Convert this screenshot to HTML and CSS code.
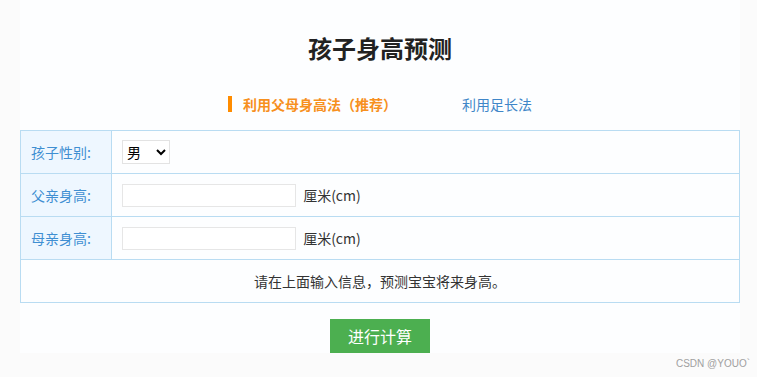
FILE: index.html
```html
<!DOCTYPE html>
<html lang="zh-CN">
<head>
    <meta charset="UTF-8">
    <title>孩子身高预测</title>
    <link rel="stylesheet" href="styles.css">
</head>
<body>
    <div class="wrap">
        <h1 class="title">孩子身高预测</h1>
        <div class="tabs">
            <span class="tab active">利用父母身高法（推荐）</span>
            <span class="tab">利用足长法</span>
        </div>
        <table class="form-table">
            <tr>
                <th>孩子性别:</th>
                <td>
                    <select class="sex">
                        <option>男</option>
                        <option>女</option>
                    </select>
                </td>
            </tr>
            <tr>
                <th>父亲身高:</th>
                <td><input type="text" class="num"> <span class="unit">厘米(cm)</span></td>
            </tr>
            <tr>
                <th>母亲身高:</th>
                <td><input type="text" class="num"> <span class="unit">厘米(cm)</span></td>
            </tr>
            <tr>
                <td colspan="2" class="result">请在上面输入信息，预测宝宝将来身高。</td>
            </tr>
        </table>
        <div class="actions">
            <button class="calc">进行计算</button>
        </div>
    </div>
    <div class="mark">CSDN @YOUO`</div>
</body>
</html>
```

FILE: styles.css
```css
body {
    margin: 0;
    background-color: #fbfbfb;
    font-family: "Microsoft YaHei", "Noto Sans CJK SC", sans-serif;
    color: #333;
}

/* белый контейнер */
.wrap {
    width: 720px;
    margin-left: 20px;
    background-color: #fdfeff;
}

.title {
    margin: 0;
    padding-top: 32px;
    text-align: center;
    font-size: 24px;
    font-weight: bold;
    line-height: 32px;
    color: #222;
}

.tabs {
    display: flex;
    justify-content: center;
    gap: 65px;
    margin-top: 32px;
    height: 16px;
}

.tab {
    font-size: 14px;
    line-height: 16px;
    color: #3f86c8;
}

.tab.active {
    color: #f7901e;
    font-weight: bold;
    border-left: 4px solid #ff8c00;
    padding-left: 11px;
}

.form-table {
    width: 720px;
    margin-top: 18px;
    border-collapse: collapse;
    border: 1px solid #b9dcf2;
    font-size: 14px;
}

.form-table th,
.form-table td {
    border: 1px solid #b9dcf2;
    height: 42px;
    padding: 0;
}

.form-table th {
    width: 80px;
    padding-left: 10px;
    text-align: left;
    font-weight: normal;
    color: #3f8fd2;
    background-color: #eef7ff;
}

.form-table td {
    padding-left: 10px;
}

.sex {
    width: 48px;
    height: 24px;
    border: 1px solid #e3e3e3;
    background: #fff;
    font-size: 14px;
    font-family: inherit;
    color: #000;
}

.num {
    width: 172px;
    height: 21px;
    border: 1px solid #e6e6e6;
    padding: 0;
    vertical-align: middle;
}

.unit {
    font-size: 14px;
    color: #333;
    margin-left: 4px;
    vertical-align: middle;
}

.form-table .result {
    padding: 0;
    text-align: center;
    color: #333;
}

.actions {
    display: flex;
    justify-content: center;
    margin-top: 16px;
}

.calc {
    width: 100px;
    height: 34px;
    border: none;
    background-color: #4caf50;
    color: #fff;
    font-size: 16px;
    font-family: inherit;
}

.mark {
    position: absolute;
    right: 7px;
    bottom: 8px;
    font-family: "Liberation Sans", Arial, sans-serif;
    font-size: 10px;
    color: #a0a0a0;
}
```
